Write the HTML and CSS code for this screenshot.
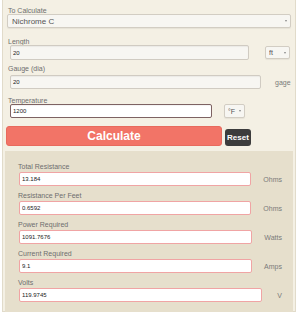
FILE: index.html
```html
<!DOCTYPE html>
<html lang="en">

<head>
    <meta charset="UTF-8">
    <title>Nichrome Wire Calculator</title>
    <link rel="stylesheet" href="styles.css">
</head>

<body>
    <div class="calc">
        <form class="top" id="form">
            <label class="lbl lbl_first" for="calcType">To Calculate</label>
            <div class="sel sel_wide">
                <select id="calcType" name="calcType">
                    <option>Nichrome C</option>
                </select>
            </div>

            <label class="lbl lbl_length" for="length">Length</label>
            <div class="row">
                <input type="text" class="fld" id="length" name="length" value="20">
                <div class="sel sel_ft">
                    <select name="lengthUnit">
                        <option>ft</option>
                    </select>
                </div>
            </div>

            <label class="lbl lbl_gauge" for="gauge">Gauge (dia)</label>
            <div class="row">
                <input type="text" class="fld" id="gauge" name="gauge" value="20">
                <span class="gage">gage</span>
            </div>

            <label class="lbl lbl_temp" for="temp">Temperature</label>
            <div class="row">
                <input type="text" class="fld" id="temp" name="temp" value="1200">
                <div class="sel sel_deg">
                    <select name="tempUnit">
                        <option>°F</option>
                    </select>
                </div>
            </div>

            <div class="btns">
                <input type="button" id="btn_calc" value="Calculate">
                <input type="button" id="btn_reset" value="Reset">
            </div>
        </form>

        <div class="results">
            <label class="lbl" for="r_total">Total Resistance</label>
            <div class="row">
                <input type="text" class="res" id="r_total" value="13.184">
                <span class="unit">Ohms</span>
            </div>

            <label class="lbl" for="r_feet">Resistance Per Feet</label>
            <div class="row">
                <input type="text" class="res" id="r_feet" value="0.6592">
                <span class="unit">Ohms</span>
            </div>

            <label class="lbl" for="r_power">Power Required</label>
            <div class="row">
                <input type="text" class="res" id="r_power" value="1091.7676">
                <span class="unit">Watts</span>
            </div>

            <label class="lbl" for="r_current">Current Required</label>
            <div class="row">
                <input type="text" class="res" id="r_current" value="9.1">
                <span class="unit">Amps</span>
            </div>

            <label class="lbl" for="r_volts">Volts</label>
            <div class="row">
                <input type="text" class="res" id="r_volts" value="119.9745">
                <span class="unit unit_v">V</span>
            </div>
        </div>
    </div>
</body>

</html>
```

FILE: styles.css
```css
body {
    margin: 0;
    font-family: "Liberation Sans", Arial, sans-serif;
}

.calc {
    width: 294px;
    height: 312px;
    margin-left: 2px;
    border: 1px solid #e1dbca;
    border-top: none;
    background-color: #f4f0e4;
    box-sizing: border-box;
}

.top {
    margin: 0;
    padding: 7px 0 0 3px;
}

.lbl {
    display: block;
    margin-left: 2px;
    font-size: 7px;
    line-height: 7px;
    color: #6e6e6e;
}

.lbl_length {
    margin-top: 10px;
}

.lbl_gauge {
    margin-top: 5px;
    margin-bottom: 3px;
}

.lbl_temp {
    margin-top: 8px;
}

.row {
    display: flex;
    align-items: center;
}

/* selects */
.sel {
    position: relative;
}

.sel select {
    display: block;
    width: 100%;
    height: 100%;
    margin: 0;
    padding: 0 0 0 4px;
    border: 1px solid #d2cdc3;
    border-radius: 2px;
    background-color: #f7f6f2;
    font-family: inherit;
    font-size: 8px;
    color: #555;
    appearance: none;
    -webkit-appearance: none;
    box-shadow: 0 1px 1px rgba(0, 0, 0, 0.06);
}

.sel::after {
    content: "";
    position: absolute;
    right: 4px;
    top: 50%;
    margin-top: -1px;
    border-left: 1.5px solid transparent;
    border-right: 1.5px solid transparent;
    border-top: 2px solid #888;
}

.sel_wide {
    width: 284px;
    height: 14px;
    margin-left: 1px;
}

.sel_ft {
    width: 25px;
    height: 13px;
    margin-left: 16px;
}

.sel_deg {
    width: 21px;
    height: 14px;
    margin-left: 12px;
}

.sel_ft select,
.sel_deg select {
    padding-left: 3px;
    font-size: 7px;
}

/* text fields */
.fld {
    box-sizing: border-box;
    height: 14px;
    margin: 0 0 0 4px;
    padding: 0 0 0 2px;
    border: 1px solid #d0cbc2;
    border-radius: 2px;
    background-color: #f7f6f2;
    font-family: inherit;
    font-size: 6px;
    color: #222;
    box-shadow: inset 0 1px 1px rgba(0, 0, 0, 0.05);
}

#length {
    width: 239px;
    height: 15px;
}

#gauge {
    width: 251px;
}

#temp {
    width: 202px;
    border: 1.5px solid #7d6262;
    background-color: white;
    outline: none;
}

.gage {
    margin-left: 14px;
    font-size: 7px;
    color: #7a7a7a;
}

/* buttons */
.btns {
    display: flex;
    align-items: flex-end;
    margin-top: 8px;
}

#btn_calc {
    width: 216px;
    height: 20px;
    margin: 0;
    padding: 0;
    border: 1px solid #e86a5d;
    border-radius: 3px;
    background-color: #f27467;
    font-family: inherit;
    font-size: 12px;
    font-weight: bold;
    color: white;
}

#btn_reset {
    width: 26px;
    height: 17px;
    margin: 0 0 0 3px;
    padding: 0;
    border: none;
    border-radius: 3px;
    background-color: #3c3c3c;
    font-family: inherit;
    font-size: 8px;
    font-weight: bold;
    color: white;
}

/* results */
.results {
    width: 288px;
    margin: 5px 0 0 2px;
    padding: 12px 0 12px 13px;
    box-sizing: border-box;
    background-color: #e6dfcc;
}

.results .lbl {
    margin: 0 0 2px 0;
}

.results .row {
    margin-bottom: 6px;
}

.results .row:last-child {
    margin-bottom: 0;
}

.res {
    flex: 1;
    box-sizing: border-box;
    height: 14px;
    min-width: 0;
    margin: 0 0 0 1px;
    padding: 0 0 0 2px;
    border: 1px solid #f0a4a4;
    border-radius: 2px;
    background-color: white;
    font-family: inherit;
    font-size: 6px;
    color: #222;
}

.unit {
    padding: 0 11px 0 12px;
    font-size: 7px;
    color: #7a7a7a;
}

.unit_v {
    padding-left: 15px;
}
```
